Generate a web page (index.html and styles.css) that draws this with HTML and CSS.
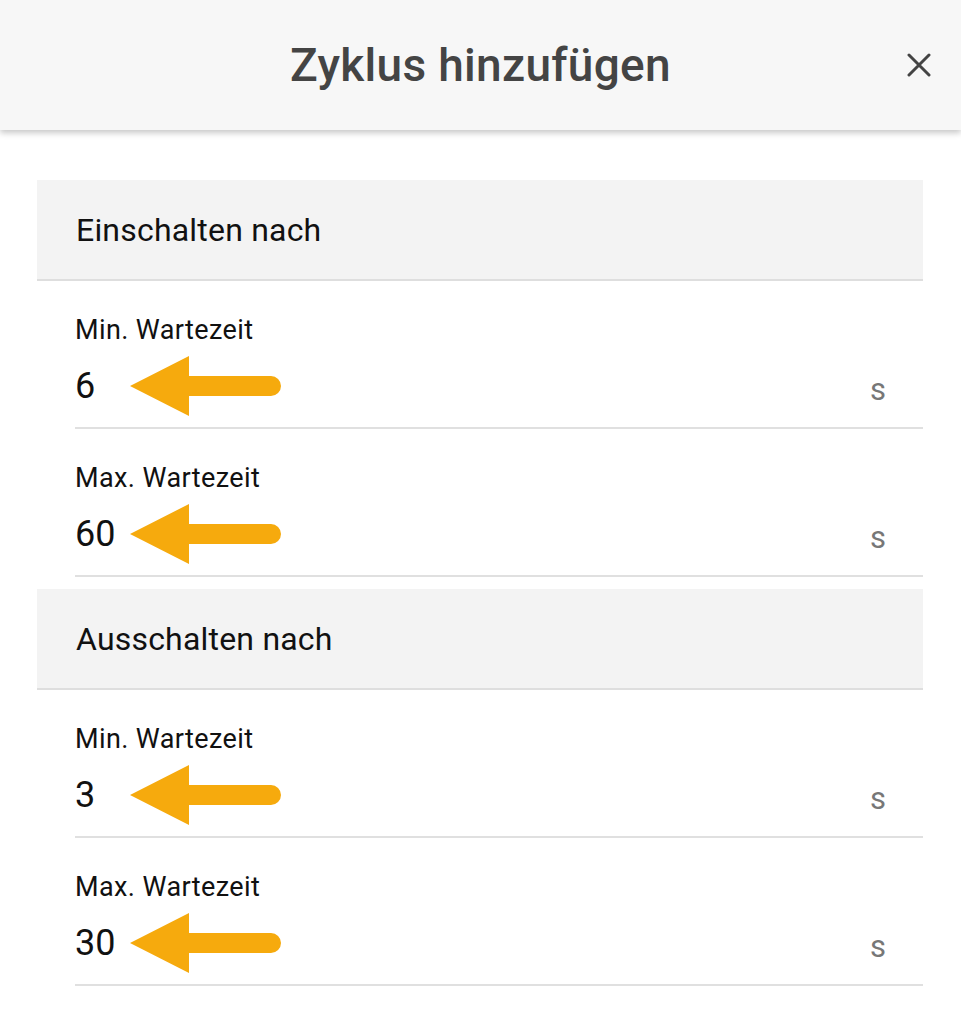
FILE: index.html
```html
<!DOCTYPE html>
<html lang="de">
<head>
<meta charset="utf-8">
<title>Zyklus hinzufügen</title>
<link rel="stylesheet" href="styles.css">
</head>
<body>
<header class="topbar">
  <div class="topbar-spacer"></div>
  <h1 class="topbar-title">Zyklus hinzufügen</h1>
  <button class="close-btn" aria-label="Schließen">
    <svg width="24" height="24" viewBox="0 0 24 24"><path d="M2 2 L22 22 M22 2 L2 22" stroke="#444" stroke-width="3" stroke-linecap="round" fill="none"/></svg>
  </button>
</header>

<main class="content">
  <section class="group">
    <div class="group-head">Einschalten nach</div>
    <div class="field">
      <div class="field-label">Min. Wartezeit</div>
      <div class="field-row">
        <span class="field-value">6</span>
        <svg class="arrow" width="152" height="60" viewBox="0 0 152 60"><path d="M0 30 L59 0 L59 20 L141 20 A10 10 0 0 1 141 40 L59 40 L59 60 Z" fill="#f6aa0d"/></svg>
        <span class="field-unit">s</span>
      </div>
    </div>
    <div class="field">
      <div class="field-label">Max. Wartezeit</div>
      <div class="field-row">
        <span class="field-value">60</span>
        <svg class="arrow" width="152" height="60" viewBox="0 0 152 60"><path d="M0 30 L59 0 L59 20 L141 20 A10 10 0 0 1 141 40 L59 40 L59 60 Z" fill="#f6aa0d"/></svg>
        <span class="field-unit">s</span>
      </div>
    </div>
  </section>

  <section class="group">
    <div class="group-head">Ausschalten nach</div>
    <div class="field">
      <div class="field-label">Min. Wartezeit</div>
      <div class="field-row">
        <span class="field-value">3</span>
        <svg class="arrow" width="152" height="60" viewBox="0 0 152 60"><path d="M0 30 L59 0 L59 20 L141 20 A10 10 0 0 1 141 40 L59 40 L59 60 Z" fill="#f6aa0d"/></svg>
        <span class="field-unit">s</span>
      </div>
    </div>
    <div class="field">
      <div class="field-label">Max. Wartezeit</div>
      <div class="field-row">
        <span class="field-value">30</span>
        <svg class="arrow" width="152" height="60" viewBox="0 0 152 60"><path d="M0 30 L59 0 L59 20 L141 20 A10 10 0 0 1 141 40 L59 40 L59 60 Z" fill="#f6aa0d"/></svg>
        <span class="field-unit">s</span>
      </div>
    </div>
  </section>
</main>
</body>
</html>
```

FILE: styles.css
```css
* { box-sizing: border-box; }

html, body {
  margin: 0;
  padding: 0;
  background: #ffffff;
  font-family: Roboto, "Noto Sans", "Liberation Sans", sans-serif;
  color: #111;
}

.topbar {
  height: 130px;
  background: #f7f7f7;
  box-shadow: 0 3px 6px rgba(0, 0, 0, 0.22);
  display: grid;
  grid-template-columns: 1fr auto 1fr;
  align-items: center;
  padding: 0 30px;
  position: relative;
  z-index: 1;
}

.topbar-title {
  margin: 0;
  font-size: 46px;
  font-weight: 500;
  color: #444;
  line-height: 52px;
  letter-spacing: 0.3px;
}

.close-btn {
  justify-self: end;
  background: none;
  border: 0;
  padding: 0;
  width: 24px;
  height: 24px;
  display: flex;
  cursor: pointer;
}

.content {
  padding: 50px 38px 0 37px;
}

.group + .group {
  margin-top: 12px;
}

.group-head {
  height: 101px;
  background: #f3f3f3;
  border-bottom: 2px solid #dedede;
  display: flex;
  align-items: center;
  padding-left: 39px;
  font-size: 32px;
  line-height: 36px;
  letter-spacing: 0.2px;
  color: #111;
}

.field {
  margin-left: 38px;
  height: 148px;
  border-bottom: 2px solid #e0e0e0;
  padding-top: 35px;
}

.field-label {
  font-size: 27px;
  line-height: 28px;
  letter-spacing: 0.4px;
  color: #111;
}

.field-row {
  margin-top: 12px;
  height: 60px;
  display: flex;
  align-items: center;
}

.field-value {
  width: 55px;
  font-size: 36px;
  line-height: 40px;
  color: #111;
}

.arrow {
  flex: none;
  display: block;
}

.field-unit {
  margin-left: auto;
  padding-right: 37px;
  padding-top: 8px;
  font-size: 31px;
  line-height: 40px;
  color: #777;
}
```
